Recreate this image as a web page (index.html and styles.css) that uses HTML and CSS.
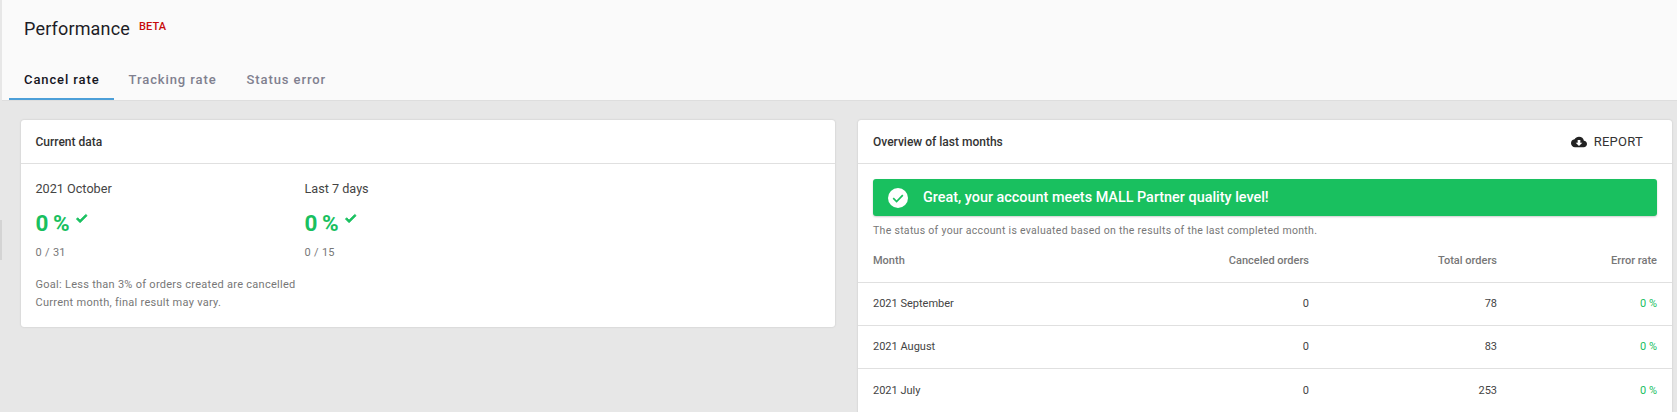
FILE: index.html
```html
<!DOCTYPE html>
<html lang="en">
<head>
<meta charset="utf-8">
<title>Performance</title>
<link rel="stylesheet" href="styles.css">
</head>
<body>
<div class="edge"><span class="edge-mark"></span></div>
<div class="page">
  <header class="head">
    <div class="title-row">
      <h1 class="title">Performance</h1>
      <span class="beta">BETA</span>
    </div>
    <nav class="tabs">
      <a class="tab tab-active">Cancel rate</a>
      <a class="tab">Tracking rate</a>
      <a class="tab">Status error</a>
    </nav>
  </header>
  <main class="content">
    <section class="card card-left">
      <div class="card-head"><h2 class="card-title">Current data</h2></div>
      <div class="card-body">
        <div class="stats">
          <div class="stat">
            <div class="stat-label">2021 October</div>
            <div class="stat-value">0 %<svg class="tick" viewBox="0 0 24 24"><path d="M9 16.2 4.8 12l-2.3 2.3L9 20.8 21.5 8.3 19.2 6z"/></svg></div>
            <div class="stat-sub">0 / 31</div>
          </div>
          <div class="stat">
            <div class="stat-label">Last 7 days</div>
            <div class="stat-value">0 %<svg class="tick" viewBox="0 0 24 24"><path d="M9 16.2 4.8 12l-2.3 2.3L9 20.8 21.5 8.3 19.2 6z"/></svg></div>
            <div class="stat-sub">0 / 15</div>
          </div>
        </div>
        <p class="note">Goal: Less than 3% of orders created are cancelled<br>Current month, final result may vary.</p>
      </div>
    </section>
    <section class="card card-right">
      <div class="card-head">
        <h2 class="card-title">Overview of last months</h2>
        <button class="report"><svg class="cloud" viewBox="0 0 24 24"><path d="M19.35 10.04A7.49 7.49 0 0 0 12 4C9.11 4 6.6 5.64 5.35 8.04A5.994 5.994 0 0 0 0 14c0 3.31 2.69 6 6 6h13c2.76 0 5-2.24 5-5 0-2.64-2.05-4.78-4.65-4.96zM17 13l-5 5-5-5h3V9h4v4h3z"/></svg>REPORT</button>
      </div>
      <div class="card-body card-body-right">
        <div class="banner">
          <svg class="banner-icon" viewBox="0 0 20 20"><circle cx="10" cy="10" r="10" fill="#fff"/><path d="M5.2 10.2 8.6 13.6 14.8 7.2" fill="none" stroke="#19c05f" stroke-width="1.7"/></svg>
          <span>Great, your account meets MALL Partner quality level!</span>
        </div>
        <p class="status">The status of your account is evaluated based on the results of the last completed month.</p>
      </div>
      <table class="table">
        <thead>
          <tr><th>Month</th><th>Canceled orders</th><th>Total orders</th><th>Error rate</th></tr>
        </thead>
        <tbody>
          <tr><td>2021 September</td><td>0</td><td>78</td><td class="ok">0 %</td></tr>
          <tr><td>2021 August</td><td>0</td><td>83</td><td class="ok">0 %</td></tr>
          <tr><td>2021 July</td><td>0</td><td>253</td><td class="ok">0 %</td></tr>
        </tbody>
      </table>
    </section>
  </main>
</div>
</body>
</html>
```
FILE: styles.css
```css
html, body { margin: 0; padding: 0; height: 412px; overflow: hidden; }
body {
  display: flex;
  font-family: Roboto, "Liberation Sans", sans-serif;
  background: #e7e7e7;
  color: #333;
}
.edge { width: 2px; flex: none; padding-top: 220px; box-sizing: border-box; background: #e7e7e7; }
.edge-mark { display: block; width: 2px; height: 40px; background: #d4d4d4; }
.page { flex: 1; min-width: 0; }
.head { background: #fafafa; height: 101px; border-bottom: 1px solid #dedede; box-sizing: border-box; }
.title-row { display: flex; align-items: flex-start; padding: 18px 0 0 22px; height: 60px; box-sizing: border-box; }
.title { margin: 0; font-size: 18px; line-height: 22px; font-weight: 400; letter-spacing: .17px; color: #1d1d26; }
.beta { margin: 3px 0 0 9px; font-size: 11px; line-height: 12px; font-weight: 500; letter-spacing: .1px; color: #c70a0a; }
.tabs { display: flex; padding-left: 7px; }
.tab {
  padding: 12px 15px 0;
  height: 40px;
  box-sizing: border-box;
  font-size: 13px;
  line-height: 16px;
  font-weight: 500;
  letter-spacing: .9px;
  color: #80808f;
}
.tab-active { padding-right: 14px; color: #15151f; border-bottom: 2px solid #4c9fd8; }
.content { display: flex; align-items: flex-start; gap: 23px; padding: 19px 5px 0 19px; }
.card { flex: 1; background: #fff; border-radius: 3px; box-shadow: 0 0 2px rgba(0,0,0,.18); }
.card-right { padding-bottom: 24px; }
.card-head {
  display: flex;
  align-items: center;
  justify-content: space-between;
  height: 43px;
  padding: 0 15px;
  border-bottom: 1px solid #e0e0e0;
}
.card-left .card-head { padding: 0 14.5px; }
.card-title { margin: 0; font-size: 12px; font-weight: 500; color: #333; }
.card-body { padding: 17px 14.5px 15px; }
.stats { display: flex; }
.stat { width: 269px; }
.stat-label { font-size: 12.65px; line-height: 16px; color: #444; }
.stat-value {
  display: flex;
  align-items: flex-start;
  margin-top: 12px;
  height: 29px;
  font-size: 22.5px;
  line-height: 28px;
  font-weight: 700;
  word-spacing: -1px;
  color: #19c05f;
}
.tick { width: 13.5px; height: 13.5px; margin: 2px 0 0 5px; fill: #19c05f; stroke: #19c05f; stroke-width: 1.5; }
.stat-sub { margin-top: 8px; font-size: 11px; line-height: 14px; letter-spacing: .3px; color: #777; }
.note { margin: 16px 0 0; font-size: 11px; line-height: 18px; letter-spacing: .27px; color: #777; }
.report {
  display: flex;
  align-items: center;
  gap: 7px;
  margin-right: 14px;
  padding: 0;
  border: 0;
  background: none;
  font: 400 13px Roboto, sans-serif;
  letter-spacing: .25px;
  color: #333;
}
.cloud { width: 16px; height: 16px; fill: #222; }
.card-body-right { padding: 15px 15px 0; }
.banner {
  display: flex;
  align-items: center;
  gap: 15px;
  height: 37px;
  padding-left: 15px;
  border-radius: 3px;
  background: #19c05f;
  box-shadow: 0 1px 2px rgba(0,0,0,.2);
  color: #fff;
  font-size: 14.4px;
  font-weight: 500;
}
.banner-icon { width: 20px; height: 20px; flex: none; }
.status { margin: 8px 0 0; font-size: 10.5px; line-height: 14px; letter-spacing: .3px; color: #777; }
.table { width: 100%; margin-top: 2px; border-collapse: collapse; table-layout: fixed; font-size: 11px; }
.table th, .table td { box-sizing: border-box; }
.table th { height: 42px; padding: 0 15px 1px; font-weight: 500; color: #777; text-align: right; }
.table td { height: 43px; padding: 0 15px; color: #444; text-align: right; border-top: 1px solid #e0e0e0; }
.table tr:last-child td { height: 45px; }
.table th:first-child, .table td:first-child { text-align: left; width: 250px; }
.table th:nth-child(3), .table td:nth-child(3) { width: 188px; }
.table th:nth-child(4), .table td:nth-child(4) { width: 160px; }
.table td.ok { color: #19c05f; }
```
